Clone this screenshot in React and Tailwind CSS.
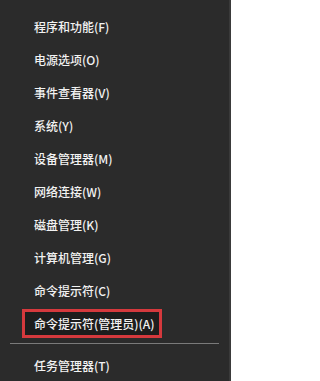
import React from "react";

const items = [
  "程序和功能(F)",
  "电源选项(O)",
  "事件查看器(V)",
  "系统(Y)",
  "设备管理器(M)",
  "网络连接(W)",
  "磁盘管理(K)",
  "计算机管理(G)",
  "命令提示符(C)",
];

export default function App() {
  return (
    <div
      className="h-[381px] w-[231px] overflow-hidden border-r-2 border-r-[#3a3a3a] bg-[#2b2b2b] pt-[10px] text-[12px] font-medium text-[#f2f2f2]"
      style={{ fontFamily: '"Noto Sans CJK SC", "Noto Sans", sans-serif' }}
    >
      {items.map((label) => (
        <div key={label} className="flex h-[33px] items-center pl-[34px]">
          {label}
        </div>
      ))}

      {/* highlighted entry */}
      <div className="flex h-[33px] items-center pl-[22px]">
        <div className="flex h-[29px] w-[140px] items-center border-[3px] border-[#d5393d] bg-[#1d1d1d] pl-[9px]">
          命令提示符(管理员)(A)
        </div>
      </div>

      <div className="mx-[10px] mt-[3px] h-px bg-[#7a7a7a]" />

      <div className="mt-[5px] flex h-[33px] items-center pl-[34px]">任务管理器(T)</div>
    </div>
  );
}
